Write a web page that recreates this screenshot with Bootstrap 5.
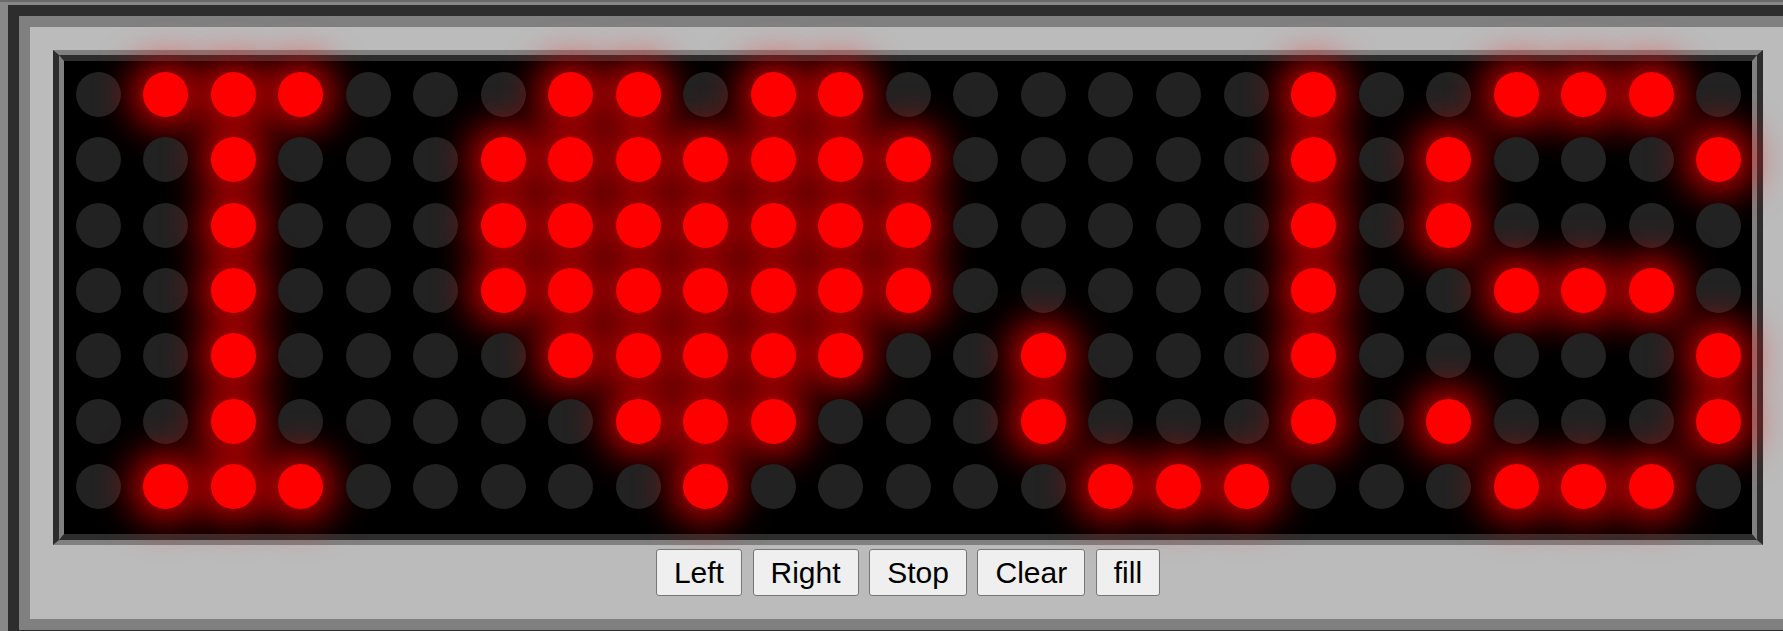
<!DOCTYPE html>
<html lang="en">
<head>
    <meta charset="UTF-8">
    <meta name="viewport" content="width=device-width, initial-scale=1.0">
    <title>LED Sign</title>
    <link href="https://cdn.jsdelivr.net/npm/bootstrap@5.3.0/dist/css/bootstrap.min.css" rel="stylesheet">
    <script src="https://cdn.jsdelivr.net/npm/bootstrap@5.3.0/dist/js/bootstrap.bundle.min.js"></script>
    <style>
        html, body { height: 631px; overflow: hidden; }
        body { background: #888; border-top: 2px solid #6a6a6a; padding: 3px 0 0 8px; }
        .frame-outer { width: 1800px; height: 636px; border: 11px solid #2d2d2d; }
        .frame-inner { height: 100%; border: 11px solid #808080; background: #bbb; padding: 23px 23px 0; }
        .sign-outer { border-style: solid; border-width: 5px 6px; border-color: #808080 #2d2d2d; }
        .sign-inner { height: 485px; border-style: solid; border-width: 6px 5px; border-color: #2d2d2d #808080; background: #000; padding-top: 1px; }
        .led-row { height: 65.33px; }
        .led-cell { width: 4%; height: 100%; padding: 10px 0 0 1px; }
        .led { width: 45px; height: 45px; border-radius: 50%; background: #222; }
        .led.lit { background: #f00; box-shadow: 0 0 40px 8px #f00; }
        .sign-controls { padding-top: 4px; gap: 10.6px; }
        .sign-btn { font: 30px/1 "Liberation Sans", Arial, sans-serif; height: 47px; padding: 0 17px; color: #000; background: #efefef; border: 1px solid #767676; border-radius: 3px; }
    </style>
</head>
<body>
    <div class="frame-outer">
        <div class="frame-inner">
            <div class="sign-outer">
                <div class="sign-inner" id="sign"></div>
            </div>
            <div class="sign-controls d-flex justify-content-center">
                <button class="btn sign-btn">Left</button>
                <button class="btn sign-btn">Right</button>
                <button class="btn sign-btn">Stop</button>
                <button class="btn sign-btn">Clear</button>
                <button class="btn sign-btn">fill</button>
            </div>
        </div>
    </div>

    <script>
        const frame = [
            ".###...##.##......#..###.",
            "..#...#######.....#.#...#",
            "..#...#######.....#.#....",
            "..#...#######.....#..###.",
            "..#....#####..#...#.....#",
            "..#.....###...#...#.#...#",
            ".###.....#.....###...###."
        ];

        const sign = document.getElementById("sign");
        frame.forEach((line) => {
            let row = '<div class="led-row d-flex">';
            for (const ch of line) {
                row += `<div class="led-cell d-flex justify-content-center"><div class="led${ch === "#" ? " lit" : ""}"></div></div>`;
            }
            sign.innerHTML += row + "</div>";
        });
    </script>
</body>
</html>
